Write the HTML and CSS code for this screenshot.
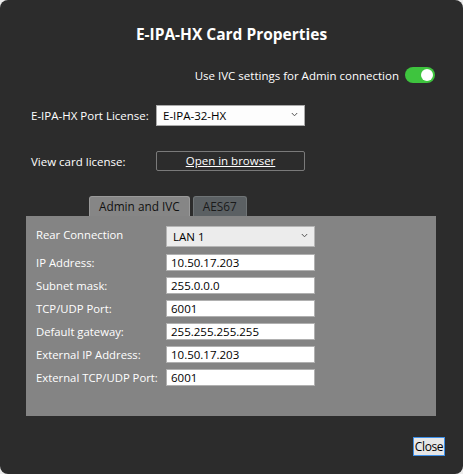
FILE: index.html
```html
<!DOCTYPE html>
<html>
<head>
<meta charset="utf-8">
<link rel="stylesheet" href="styles.css">
</head>
<body>
<div class="dialog">
  <div class="title">E-IPA-HX Card Properties</div>
  <div class="toggle-row">
    <span>Use IVC settings for Admin connection</span>
    <span class="toggle"><span class="knob"></span></span>
  </div>
  <div class="row license-row">
    <span class="label">E-IPA-HX Port License:</span>
    <div class="select white">
      <span>E-IPA-32-HX</span>
      <svg class="chev" width="7" height="5" viewBox="0 0 7 5"><path d="M0.8 1 L3.5 3.8 L6.2 1" fill="none" stroke="#555" stroke-width="1"/></svg>
    </div>
  </div>
  <div class="row view-row">
    <span class="label">View card license:</span>
    <div class="link-btn">Open in browser</div>
  </div>
  <div class="tabs">
    <div class="tab active">Admin and IVC</div>
    <div class="tab">AES67</div>
  </div>
  <div class="panel">
    <div class="prow first">
      <span class="plabel">Rear Connection</span>
      <div class="select light">
        <span>LAN 1</span>
        <svg class="chev" width="7" height="5" viewBox="0 0 7 5"><path d="M0.8 1 L3.5 3.8 L6.2 1" fill="none" stroke="#555" stroke-width="1"/></svg>
      </div>
    </div>
    <div class="prow"><span class="plabel">IP Address:</span><div class="input">10.50.17.203</div></div>
    <div class="prow"><span class="plabel">Subnet mask:</span><div class="input">255.0.0.0</div></div>
    <div class="prow"><span class="plabel">TCP/UDP Port:</span><div class="input">6001</div></div>
    <div class="prow"><span class="plabel">Default gateway:</span><div class="input">255.255.255.255</div></div>
    <div class="prow"><span class="plabel">External IP Address:</span><div class="input">10.50.17.203</div></div>
    <div class="prow"><span class="plabel">External TCP/UDP Port:</span><div class="input">6001</div></div>
  </div>
  <div class="footer">
    <div class="close">Close</div>
  </div>
</div>
</body>
</html>
```

FILE: styles.css
```css
html, body {
  margin: 0;
  padding: 0;
  background: #ececec;
}
body {
  font-family: "Open Sans", "Noto Sans", sans-serif;
  font-size: 11.5px;
  color: #fff;
}
.dialog {
  width: 463px;
  height: 474px;
  box-sizing: border-box;
  background: #2c2c2c;
  border-radius: 8px;
  overflow: hidden;
  display: flex;
  flex-direction: column;
}
.title {
  margin-top: 24px;
  height: 20px;
  line-height: 20px;
  text-align: center;
  font-weight: bold;
  font-size: 15.5px;
}
.toggle-row {
  margin-top: 21px;
  height: 20px;
  display: flex;
  justify-content: flex-end;
  align-items: center;
  padding-right: 28px;
  gap: 6px;
}
.toggle {
  width: 30px;
  height: 16px;
  border-radius: 8px;
  background: #3ec43e;
  display: flex;
  align-items: center;
  justify-content: flex-end;
  padding-right: 2px;
  box-sizing: border-box;
}
.knob {
  width: 12px;
  height: 12px;
  border-radius: 50%;
  background: #fff;
}
.row {
  display: flex;
  align-items: center;
  padding-left: 31px;
}
.label {
  width: 125px;
}
.license-row {
  margin-top: 20px;
  height: 21px;
}
.select {
  width: 149px;
  height: 21px;
  box-sizing: border-box;
  display: flex;
  align-items: center;
  justify-content: space-between;
  padding: 0 6px 0 6px;
  color: #000;
  border: 1px solid #aaa;
}
.select.white { background: #fdfdfd; }
.select.light { background: #ececec; border-color: #b5b5b5; }
.chev { margin-top: -2px; }
.view-row {
  margin-top: 25px;
  height: 20px;
}
.link-btn {
  width: 149px;
  height: 20px;
  box-sizing: border-box;
  border: 1px solid #7a7a7a;
  border-radius: 2px;
  text-align: center;
  line-height: 18px;
  text-decoration: underline;
}
.tabs {
  margin-top: 25px;
  margin-left: 89px;
  height: 20px;
  display: flex;
  gap: 3px;
  align-items: flex-end;
}
.tab {
  box-sizing: border-box;
  height: 20px;
  border-radius: 3px 3px 0 0;
  border: 1px solid #6f7476;
  border-bottom: none;
  background: #5b6063;
  color: #1a1a1a;
  padding: 0 9px;
  line-height: 19px;
  font-size: 11.8px;
}
.tab.active {
  background: #868686;
  border-color: #9a9a9a;
  color: #111;
}
.panel {
  margin: 0 27px 0 26px;
  height: 200px;
  background: #848484;
  padding: 10px 0 0 10px;
  box-sizing: border-box;
  display: flex;
  flex-direction: column;
  gap: 6px;
}
.prow {
  display: flex;
  align-items: center;
  height: 17px;
}
.prow.first {
  height: 21px;
  align-items: flex-start;
  margin-bottom: 1px;
}
.plabel {
  width: 130px;
  font-size: 11.3px;
}
.prow.first .plabel { line-height: 17px; }
.input {
  width: 149px;
  height: 17px;
  box-sizing: border-box;
  background: #fff;
  border: 1px solid #b0b0b0;
  color: #000;
  padding-left: 4px;
  line-height: 15px;
}
.footer {
  margin-top: 21px;
  display: flex;
  justify-content: flex-end;
  padding-right: 18px;
}
.close {
  width: 32px;
  height: 19px;
  box-sizing: border-box;
  background: #e6e6e6;
  border: 1px solid #3d8fe8;
  color: #000;
  text-align: center;
  line-height: 17px;
  font-size: 12px;
  letter-spacing: -0.4px;
}
```
